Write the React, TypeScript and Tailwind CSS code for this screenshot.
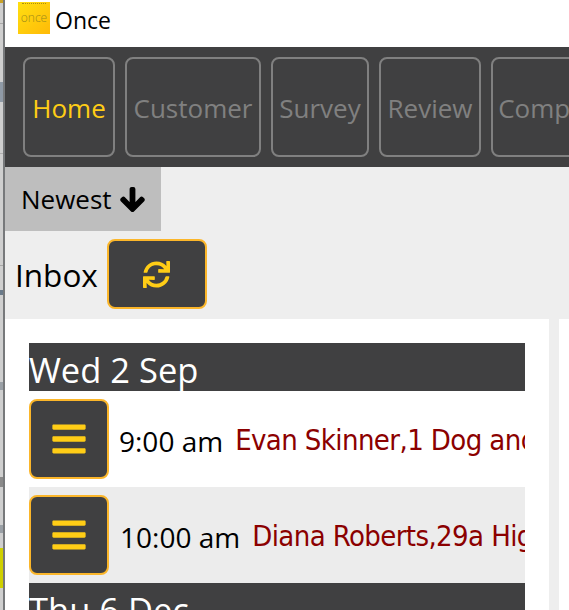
import { FaArrowDown, FaBars, FaSync } from 'react-icons/fa'

const tabs = [
  { label: 'Home', width: 'w-[92px]', active: true },
  { label: 'Customer', width: 'w-[136px]' },
  { label: 'Survey', width: 'w-[98px]' },
  { label: 'Review', width: 'w-[102px]' },
  { label: 'Compare', width: 'w-[126px]' },
]

const rows = [
  { time: '9:00 am', name: 'Evan Skinner,1 Dog and Fox Lane', bg: 'bg-white', gap: 'ml-[10px]' },
  { time: '10:00 am', name: 'Diana Roberts,29a High Street', bg: 'bg-[#ececec]', gap: 'ml-[11px]' },
]

function DesktopEdge() {
  return (
    <div className="flex flex-col w-[3px] h-[610px] bg-[#cfcfcf] shrink-0 overflow-hidden">
      <div className="h-[3px] bg-[#c9a227]" />
      <div className="h-[20px]" />
      <div className="h-[1px] bg-[#a8a8a8]" />
      <div className="h-[58px]" />
      <div className="h-[20px] bg-[#8f9aa6]" />
      <div className="h-[51px]" />
      <div className="h-[1px] bg-[#b0b0b0]" />
      <div className="h-[111px]" />
      <div className="h-[1px] bg-[#a8a8a8]" />
      <div className="h-[24px]" />
      <div className="h-[5px] bg-[#6a7a8a]" />
      <div className="h-[87px]" />
      <div className="h-[8px] bg-[#9aa0a6]" />
      <div className="h-[87px]" />
      <div className="h-[10px] bg-[#8a8a8a]" />
      <div className="h-[38px]" />
      <div className="h-[8px] bg-[#9aa0a6]" />
      <div className="h-[15px]" />
      <div className="h-[40px] bg-[#cfd000]" />
    </div>
  )
}

export default function App() {
  return (
    <div className="flex w-[569px] h-[610px] overflow-hidden bg-white font-['Open_Sans',sans-serif]">
      <DesktopEdge />
      <div className="w-[2px] h-[610px] bg-[#77797b] shrink-0" />

      <div className="flex flex-col flex-1 min-w-0">
        {/* Title bar */}
        <div className="flex items-center h-[47px] shrink-0 bg-white">
          <div className="flex flex-col items-center w-8 h-8 ml-[13px] mb-[11px] bg-gradient-to-br from-[#ffdf10] to-[#ffba08]">
            <div className="w-6 border-t border-dotted border-[#a98f12] mt-[1px]" />
            <span className="text-[12px] font-light leading-none mt-[8px] text-[#a08c1a]">once</span>
          </div>
          <span className="ml-[5px] mb-[7px] text-[23px] leading-none text-black">Once</span>
        </div>

        {/* Nav */}
        <div className="flex items-center gap-[10px] h-[120px] shrink-0 pl-[18px] bg-[#404041] overflow-hidden">
          {tabs.map((tab) => (
            <div
              key={tab.label}
              className={`flex items-center justify-center h-[100px] pt-[3px] shrink-0 rounded-lg border-2 border-[#808080] text-[26px] ${tab.width} ${tab.active ? 'text-[#ffcd16]' : 'text-[#808080]'}`}
            >
              {tab.label}
            </div>
          ))}
        </div>

        {/* Sort + inbox */}
        <div className="shrink-0 bg-[#eeeeee] h-[152px]">
          <div className="flex items-center gap-[7px] w-[156px] h-[64px] pl-[16px] bg-[#bebebe] text-[26px] text-black">
            <span className="pt-[1px]">Newest</span>
            <FaArrowDown size={27} stroke="currentColor" strokeWidth={30} />
          </div>
          <div className="flex items-center mt-[8px] pl-[10px]">
            <span className="pt-[2px] text-[31.5px] text-black leading-none mr-[9px]">Inbox</span>
            <div className="flex items-center justify-center w-[100px] h-[70px] rounded-lg border-2 border-[#fbb62a] bg-[#404041] text-[#ffcd16]">
              <FaSync size={27} />
            </div>
          </div>
        </div>

        {/* Cards */}
        <div className="flex flex-1 min-h-0 gap-[10px] bg-[#eeeeee]">
          <div className="w-[544px] shrink-0 bg-white px-[24px] pt-[24px]">
            <div className="h-[48px] bg-[#404041] text-white text-[34.5px] leading-[53px]">Wed 2 Sep</div>
            {rows.map((row) => (
              <div key={row.time} className={`flex items-center h-[96px] overflow-hidden whitespace-nowrap ${row.bg}`}>
                <div className="flex items-center justify-center w-[80px] h-[80px] shrink-0 rounded-lg border-2 border-[#fbb62a] bg-[#404041] text-[#ffcd16]">
                  <FaBars size={38} />
                </div>
                <span className={`pt-[3px] text-[28px] text-black ${row.gap}`}>{row.time}</span>
                <span className="pt-[3px] ml-[12px] text-[29px] tracking-[-0.6px] text-[#8b0000] font-['DejaVu_Sans',sans-serif] [font-stretch:condensed]">{row.name}</span>
              </div>
            ))}
            <div className="h-[48px] bg-[#404041] text-white text-[34.5px] leading-[53px]">Thu 6 Dec</div>
          </div>
          <div className="flex-1 bg-white" />
        </div>
      </div>
    </div>
  )
}
